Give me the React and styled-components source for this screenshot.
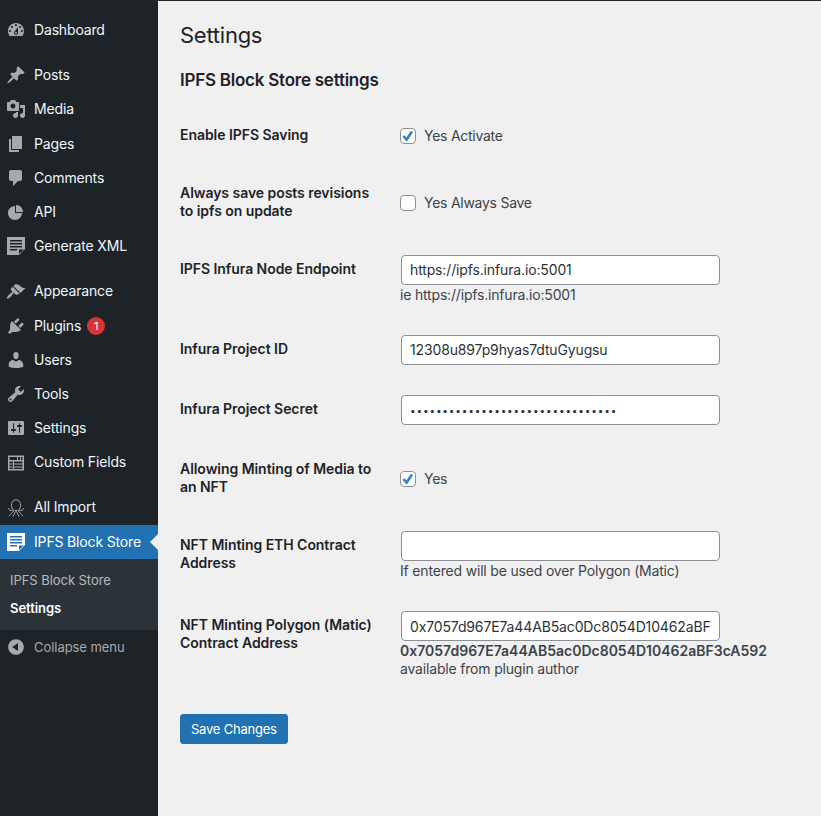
import React from 'react';
import styled, { createGlobalStyle } from 'styled-components';

const GlobalStyle = createGlobalStyle`
  html, body {
    margin: 0;
    padding: 0;
    height: 100%;
    background: #f0f0f1;
    font-family: Inter, "Liberation Sans", sans-serif;
    font-size: 13px;
    color: #3c434a;
  }
  * { box-sizing: border-box; }
`;

const icons = {
  dashboard: 'M3.76 16h12.48c1.1-1.37 1.76-3.11 1.76-5 0-4.42-3.58-8-8-8s-8 3.58-8 8c0 1.89.66 3.63 1.76 5zM10 4c.55 0 1 .45 1 1s-.45 1-1 1-1-.45-1-1 .45-1 1-1zM6 6c.55 0 1 .45 1 1s-.45 1-1 1-1-.45-1-1 .45-1 1-1zm8 0c.55 0 1 .45 1 1s-.45 1-1 1-1-.45-1-1 .45-1 1-1zm-5.37 5.55L12 7v6c0 1.1-.9 2-2 2s-2-.9-2-2c0-.57.24-1.08.63-1.45zM4 10c.55 0 1 .45 1 1s-.45 1-1 1-1-.45-1-1 .45-1 1-1zm12 0c.55 0 1 .45 1 1s-.45 1-1 1-1-.45-1-1 .45-1 1-1zm-5 3c0-.55-.45-1-1-1s-1 .45-1 1 .45 1 1 1 1-.45 1-1z',
  post: 'M10.44 3.02l1.82-1.82 6.36 6.35-1.83 1.82c-1.05-.68-2.48-.57-3.41.36l-.75.75c-.92.93-1.04 2.35-.35 3.41l-1.83 1.82-2.41-2.41-2.8 2.79c-.42.42-3.38 2.71-3.8 2.29s1.86-3.39 2.28-3.81l2.79-2.79L4.1 9.36l1.83-1.82c1.05.69 2.48.57 3.4-.36l.75-.75c.93-.92 1.05-2.35.36-3.41z',
  media: 'M13 11V4c0-.55-.45-1-1-1h-1.67L9 1H5L3.67 3H2c-.55 0-1 .45-1 1v7c0 .55.45 1 1 1h10c.55 0 1-.45 1-1zM7 4.5c1.38 0 2.5 1.12 2.5 2.5S8.38 9.5 7 9.5 4.5 8.38 4.5 7 5.62 4.5 7 4.5zM14 6h5v10.5c0 1.38-1.12 2.5-2.5 2.5S14 17.88 14 16.5s1.12-2.5 2.5-2.5c.17 0 .34.02.5.05V9h-3V6zm-4 8.05V13h2v3.5c0 1.38-1.12 2.5-2.5 2.5S7 17.88 7 16.5 8.12 14 9.5 14c.17 0 .34.02.5.05z',
  page: 'M6 15V2h10v13H6zm-1 1h8v2H3V5h2v11z',
  comment: 'M5 2h9c1.1 0 2 .9 2 2v7c0 1.1-.9 2-2 2h-2l-5 5v-5H5c-1.1 0-2-.9-2-2V4c0-1.1.9-2 2-2z',
  pie: 'M10 10V3c3.87 0 7 3.13 7 7h-7zM9 4v7h7c0 3.87-3.13 7-7 7s-7-3.13-7-7 3.13-7 7-7z',
  doc: 'M1 1h18v12l-6 6H1zM4 4v1.5h12V4zM4 7v1.5h12V7zM4 10v1.5h12V10zM4 13v1.5h7V13zM13 13.5V18l5-4.5z',
  brush: 'M14.48 11.06L7.41 3.99l1.5-1.5c.5-.56 2.3-.47 3.51.32 1.21.8 1.43 1.28 2.91 2.1 1.18.64 2.45 1.26 4.45.85zm-.71.71L6.7 4.7 4.93 6.47c-.39.39-.39 1.02 0 1.41l1.06 1.06c.39.39.39 1.03 0 1.42-.6.6-1.43 1.11-2.21 1.69-.35.26-.7.53-1.01.84-1.33 1.32-2.36 2.83-1.66 3.53.71.71 2.22-.33 3.54-1.65.31-.31.58-.65.84-1 .57-.78 1.08-1.61 1.69-2.21.39-.39 1.02-.39 1.41 0l1.06 1.06c.39.39 1.02.39 1.41 0z',
  plug: 'M13.11 4.36L9.87 7.6 8 5.73l3.24-3.24c.35-.34 1.05-.2 1.56.32.52.51.66 1.21.31 1.55zm-8 1.77l.91-1.12 9.01 9.01-1.19.84c-.71.71-2.63 1.16-3.82 1.16H6.14L4.9 17.26c-.59.59-1.54.59-2.12 0-.59-.58-.59-1.53 0-2.12l1.24-1.24v-3.88c0-1.13.4-3.19 1.09-3.89zm7.26 3.97l3.24-3.24c.34-.35 1.04-.21 1.55.31.52.51.66 1.21.31 1.55l-3.24 3.25z',
  user: 'M10 9.25c-2.27 0-2.73-3.44-2.73-3.44C7 4.02 7.82 2 9.97 2c2.16 0 2.98 2.02 2.71 3.81 0 0-.41 3.44-2.68 3.44zm0 2.57L12.72 10c2.39 0 4.52 2.33 4.52 4.53v2.49s-3.65 1.13-7.24 1.13c-3.65 0-7.24-1.13-7.24-1.13v-2.49c0-2.25 1.94-4.53 4.47-4.53z',
  tools: 'M16.68 9.77c-1.34 1.34-3.3 1.67-4.95.99l-5.41 6.52c-.99.99-2.59.99-3.58 0s-.99-2.59 0-3.57l6.52-5.42c-.68-1.65-.35-3.61.99-4.95 1.28-1.28 3.12-1.62 4.72-1.06l-2.89 2.89 2.82 2.82 2.86-2.87c.53 1.58.18 3.39-1.08 4.65zM3.81 16.21c.4.39 1.04.39 1.43 0 .4-.4.4-1.04 0-1.43-.39-.4-1.03-.4-1.43 0-.39.39-.39 1.03 0 1.43z',
  settings: 'M18 16V4c0-.55-.45-1-1-1H3c-.55 0-1 .45-1 1v12c0 .55.45 1 1 1h14c.55 0 1-.45 1-1zM8 11h1c.55 0 1 .45 1 1s-.45 1-1 1H8v1.5c0 .28-.22.5-.5.5s-.5-.22-.5-.5V13H6c-.55 0-1-.45-1-1s.45-1 1-1h1V5.5c0-.28.22-.5.5-.5s.5.22.5.5V11zm5-2h-1c-.55 0-1-.45-1-1s.45-1 1-1h1V5.5c0-.28.22-.5.5-.5s.5.22.5.5V7h1c.55 0 1 .45 1 1s-.45 1-1 1h-1v5.5c0 .28-.22.5-.5.5s-.5-.22-.5-.5V9z',
  table: 'M2 2.5h16v15H2zM3.5 4v3H11V4zM12 4v3h2V4zM15 4v3h1.5V4zM3.5 8.5v2H7v-2zM8 8.5v2h8.5v-2zM3.5 11.5v2H7v-2zM8 11.5v2h8.5v-2zM3.5 14.5V16H7v-1.5zM8 14.5V16h8.5v-1.5z',
  collapse: 'M10 2.16c4.33 0 7.84 3.51 7.84 7.84s-3.51 7.84-7.84 7.84S2.16 14.33 2.16 10 5.71 2.16 10 2.16zm2 11.72V6.12L6.18 9.97z',
};

function MenuIcon({ name }) {
  return (
    <IconSlot>
      <svg width="20" height="20" viewBox="0 0 20 20" fill="currentColor" fillRule="evenodd">
        <path d={icons[name]} />
      </svg>
    </IconSlot>
  );
}

function OctopusIcon() {
  return (
    <IconSlot>
      <svg width="20" height="20" viewBox="0 0 20 20" fill="none" stroke="currentColor" strokeWidth="1" strokeLinecap="round">
        <path d="M6.5 11C4.6 9 4.6 2 10 1.8 15.4 2 15.4 9 13.5 11c-.6.7-.4 1.2.3 1.5" />
        <path d="M6.5 11c.6.7.4 1.2-.3 1.5-1.4.5-3.2 0-3.7-2" />
        <path d="M13.8 12.5c1.4.5 3.2 0 3.7-2" />
        <path d="M8 12c0 2-2.5 2.6-3.5 4.5L3 18" />
        <path d="M12 12c0 2 2.5 2.6 3.5 4.5L17 18" />
        <path d="M9.5 12.5c0 1.5-1 3-2.3 5.5M10.5 12.5c0 1.5 1 3 2.3 5.5" />
      </svg>
    </IconSlot>
  );
}

function CheckMark() {
  return (
    <svg width="16" height="16" viewBox="0 0 16 16" fill="none" stroke="#3582c4" strokeWidth="2.6">
      <path d="M3.4 8l3.2 3.6 5.4-8" />
    </svg>
  );
}

const topMenu = [
  { label: 'Dashboard', icon: 'dashboard', gap: '10.6px' },
  { label: 'Posts', icon: 'post' },
  { label: 'Media', icon: 'media' },
  { label: 'Pages', icon: 'page' },
  { label: 'Comments', icon: 'comment' },
  { label: 'API', icon: 'pie' },
  { label: 'Generate XML', icon: 'doc', gap: '11.2px' },
  { label: 'Appearance', icon: 'brush' },
  { label: 'Plugins', icon: 'plug', badge: 1 },
  { label: 'Users', icon: 'user' },
  { label: 'Tools', icon: 'tools' },
  { label: 'Settings', icon: 'settings' },
  { label: 'Custom Fields', icon: 'table', gap: '10.8px' },
];

export default function App() {
  return (
    <>
      <GlobalStyle />
      <Page>
        <Sidebar>
          <Menu>
            {topMenu.map(item => (
              <MenuItem key={item.label} $gap={item.gap}>
                <MenuIcon name={item.icon} />
                {item.label}
                {item.badge && <Badge>{item.badge}</Badge>}
              </MenuItem>
            ))}
            <MenuItem $gap="0.6px">
              <OctopusIcon />
              All Import
            </MenuItem>
            <ActiveItem>
              <MenuIcon name="doc" />
              IPFS Block Store
            </ActiveItem>
            <SubMenu>
              <SubItem>IPFS Block Store</SubItem>
              <SubItem $current>Settings</SubItem>
            </SubMenu>
            <CollapseItem>
              <MenuIcon name="collapse" />
              Collapse menu
            </CollapseItem>
          </Menu>
        </Sidebar>
        <Content>
          <Title>Settings</Title>
          <SectionTitle>IPFS Block Store settings</SectionTitle>
          <FormTable>
            <tbody>
              <tr>
                <Label>Enable IPFS Saving</Label>
                <Field $middle>
                  <CheckRow>
                    <CheckBox><CheckMark /></CheckBox>
                    Yes Activate
                  </CheckRow>
                </Field>
              </tr>
              <tr>
                <Label>Always save posts revisions to ipfs on update</Label>
                <Field $middle>
                  <CheckRow>
                    <CheckBox />
                    Yes Always Save
                  </CheckRow>
                </Field>
              </tr>
              <tr>
                <Label>IPFS Infura Node Endpoint</Label>
                <Field>
                  <TextInput type="text" defaultValue="https://ipfs.infura.io:5001" />
                  <Hint>ie https://ipfs.infura.io:5001</Hint>
                </Field>
              </tr>
              <tr>
                <Label>Infura Project ID</Label>
                <Field>
                  <TextInput type="text" defaultValue="12308u897p9hyas7dtuGyugsu" />
                </Field>
              </tr>
              <tr>
                <Label>Infura Project Secret</Label>
                <Field>
                  <SecretInput type="password" defaultValue="12308u897p9hyas7dtuGyugsu1234567" />
                </Field>
              </tr>
              <tr>
                <Label>Allowing Minting of Media to an NFT</Label>
                <Field $middle>
                  <CheckRow>
                    <CheckBox><CheckMark /></CheckBox>
                    Yes
                  </CheckRow>
                </Field>
              </tr>
              <tr>
                <Label>NFT Minting ETH Contract Address</Label>
                <Field>
                  <TextInput type="text" defaultValue="" />
                  <Hint>If entered will be used over Polygon (Matic)</Hint>
                </Field>
              </tr>
              <tr>
                <Label>NFT Minting Polygon (Matic) Contract Address</Label>
                <Field>
                  <TextInput type="text" defaultValue="0x7057d967E7a44AB5ac0Dc8054D10462aBF3cA592" />
                  <Address>0x7057d967E7a44AB5ac0Dc8054D10462aBF3cA592</Address>
                  <Author>available from plugin author</Author>
                </Field>
              </tr>
            </tbody>
          </FormTable>
          <SaveButton type="button">Save Changes</SaveButton>
        </Content>
      </Page>
    </>
  );
}

const Page = styled.div`
  display: flex;
  min-height: 100vh;
  border-top: 1px solid #1d2327;
`;
const Sidebar = styled.div`
  width: 158px;
  flex-shrink: 0;
  background: #1d2327;
  color: #f0f6fc;
`;
const Menu = styled.div`
  display: flex;
  flex-direction: column;
  padding-top: 12.4px;
`;
const IconSlot = styled.span`
  display: flex;
  align-items: center;
  justify-content: center;
  width: 32px;
  margin-right: 2px;
  color: #a7aaad;
`;
const MenuItem = styled.div`
  display: flex;
  align-items: center;
  height: 34.2px;
  margin-bottom: ${p => p.$gap || '0'};
  font-size: 14px;
  line-height: 1.3;
  letter-spacing: -0.16px;
`;
const ActiveItem = styled(MenuItem)`
  position: relative;
  background: #2271b1;
  color: #fff;
  ${IconSlot} { color: #fff; }
  &::after {
    content: "";
    position: absolute;
    right: 0;
    top: 50%;
    margin-top: -8px;
    border: 8px solid transparent;
    border-right-color: #f0f0f1;
  }
`;
const Badge = styled.span`
  display: inline-flex;
  align-items: center;
  justify-content: center;
  width: 18px;
  height: 18px;
  margin-left: 6px;
  border-radius: 9px;
  background: #d63638;
  color: #fff;
  font-size: 11px;
`;
const SubMenu = styled.div`
  display: flex;
  flex-direction: column;
  padding: 6.4px 0 8px;
  background: #2c3338;
`;
const SubItem = styled.div`
  padding: 5px 10px;
  font-size: 13px;
  line-height: 1.4;
  letter-spacing: -0.05px;
  color: ${p => (p.$current ? '#fff' : 'rgba(240, 246, 252, 0.7)')};
  font-weight: ${p => (p.$current ? 600 : 400)};
`;
const CollapseItem = styled(MenuItem)`
  font-size: 13px;
  letter-spacing: -0.05px;
  color: #a7aaad;
`;
const Content = styled.div`
  flex: 1;
  min-width: 0;
  padding: 19px 22px 0;
`;
const Title = styled.h1`
  margin: 0;
  font-size: 22px;
  font-weight: 400;
  line-height: 30px;
  letter-spacing: -0.25px;
  color: #1d2327;
`;
const SectionTitle = styled.h2`
  margin: 20px 0 0;
  font-size: 17px;
  font-weight: 600;
  line-height: 21px;
  letter-spacing: -0.24px;
  color: #1d2327;
`;
const FormTable = styled.table`
  margin-top: 14.8px;
  border-collapse: collapse;
  table-layout: fixed;
  width: 619px;
`;
const Label = styled.th`
  width: 210px;
  padding: 20px 10px 19.7px 0;
  vertical-align: top;
  text-align: left;
  font-size: 14px;
  font-weight: 600;
  line-height: 1.3;
  letter-spacing: -0.05px;
  color: #1d2327;
`;
const Field = styled.td`
  padding: ${p => (p.$middle ? '2px 10px 0' : '15px 10px')};
  vertical-align: ${p => (p.$middle ? 'middle' : 'top')};
  font-size: 14px;
  line-height: 1.3;
  letter-spacing: -0.18px;
`;
const CheckRow = styled.label`
  display: flex;
  align-items: center;
  gap: 8px;
  letter-spacing: -0.26px;
`;
const CheckBox = styled.span`
  display: block;
  width: 16px;
  height: 16px;
  background: #fff;
  border: 1px solid #8c8f94;
  border-radius: 4px;
  position: relative;
  svg {
    position: absolute;
    left: -1px;
    top: -1px;
  }
`;
const TextInput = styled.input`
  display: block;
  width: 319px;
  height: 30px;
  margin: 0 0 0 1px;
  padding: 0 8px;
  background: #fff;
  border: 1px solid #8c8f94;
  border-radius: 4px;
  outline: none;
  font-family: inherit;
  font-size: 14px;
  letter-spacing: -0.14px;
  color: #2c3338;
`;
const SecretInput = styled(TextInput)`
  font-size: 10px;
  letter-spacing: 0.85px;
`;
const Hint = styled.p`
  margin: 1px 0 0;
  padding-bottom: 1px;
  font-size: 14px;
  line-height: 1.3;
  color: #3c434a;
`;
const Address = styled.div`
  margin-top: 1px;
  font-size: 14px;
  font-weight: 600;
  line-height: 18px;
  letter-spacing: 0;
  white-space: nowrap;
`;
const Author = styled.div`
  font-size: 14px;
  line-height: 1.3;
`;
const SaveButton = styled.button`
  display: block;
  height: 30px;
  margin-top: 21px;
  padding: 0 10px;
  background: #2271b1;
  border: 1px solid #2271b1;
  border-radius: 3px;
  font-family: inherit;
  font-size: 13px;
  letter-spacing: -0.22px;
  color: #fff;
`;
